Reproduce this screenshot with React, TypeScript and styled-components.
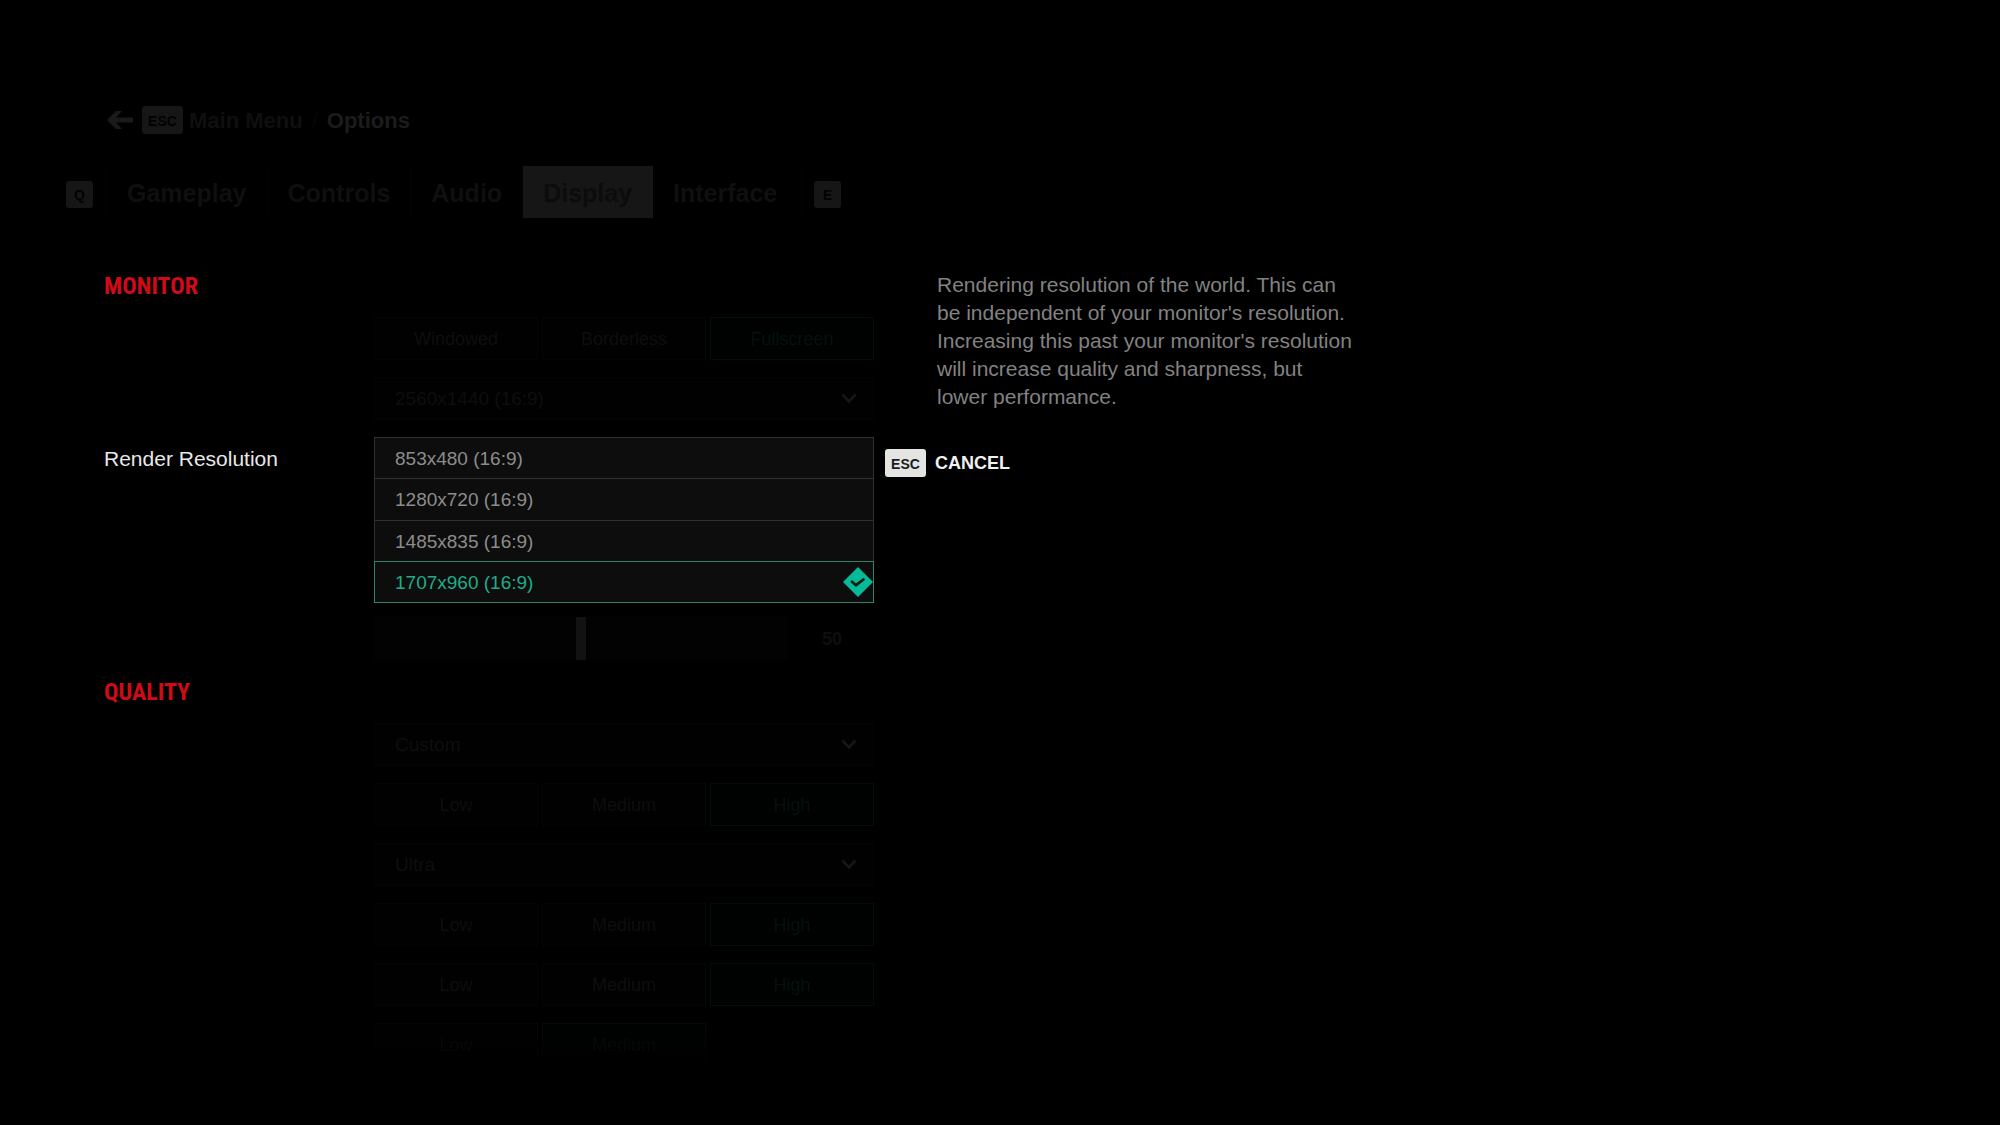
import React, { useState } from "react";
import styled, { createGlobalStyle, css } from "styled-components";

const GlobalStyle = createGlobalStyle`
  * { box-sizing: border-box; }
  body {
    margin: 0;
    background: #000;
    color: #e6e6e6;
    font-family: "Liberation Sans", Arial, sans-serif;
  }
  button, input, select { font-family: inherit; }
`;

const Page = styled.div`
  min-height: 100vh;
  padding: 106px 66px 60px;
  background: #000;
`;

const Breadcrumb = styled.nav`
  display: flex;
  align-items: center;
  height: 28px;
  padding-left: 41px;
  font-size: 22px;
  font-weight: 700;
  line-height: 30px;
`;

const BackButton = styled.button`
  display: flex;
  align-items: center;
  gap: 9px;
  padding: 0;
  border: 0;
  background: none;
  cursor: pointer;
`;

const KeyCap = styled.kbd<{ $bright?: boolean; $square?: boolean }>`
  display: flex;
  align-items: center;
  justify-content: center;
  flex: none;
  width: ${(p) => (p.$square ? 27 : 41)}px;
  height: ${(p) => (p.$square ? 27 : 28)}px;
  padding-top: 2px;
  border-radius: 3px;
  background: ${(p) => (p.$bright ? "#e4e4e3" : "#161616")};
  color: ${(p) => (p.$bright ? "#1c1c1c" : "#020202")};
  font-family: inherit;
  font-size: 14px;
  font-weight: 700;
  line-height: 16px;
`;

const Crumb = styled.a`
  margin-left: 6px;
  padding-top: 2px;
  color: #0f0f0f;
  text-decoration: none;
`;

const Slash = styled.span`
  margin: 0 9px;
  padding-top: 2px;
  color: #060606;
  font-weight: 400;
`;

const Current = styled.span`
  padding-top: 2px;
  color: #1c1c1c;
`;

const TabBar = styled.nav`
  display: flex;
  align-items: center;
  gap: 12px;
  margin-top: 32px;
`;

const KeyHint = styled.button`
  margin-top: 4px;
  padding: 0;
  border: 0;
  background: none;
  cursor: pointer;
`;

const Tabs = styled.div`
  display: flex;
  padding-left: 1px;
  border-left: 1px solid #040404;
`;

const Tab = styled.button<{ $active: boolean }>`
  height: 52px;
  padding: 2px 20px 0;
  border: 0;
  border-right: 1px solid ${(p) => (p.$active ? "#161616" : "#040404")};
  background: ${(p) => (p.$active ? "#161616" : "transparent")};
  color: ${(p) => (p.$active ? "#0c0c0c" : "#0f0f0f")};
  font-size: 25px;
  font-weight: 700;
  line-height: 50px;
  cursor: pointer;
  &:last-child { padding-right: 24px; }
`;

const Content = styled.main`
  display: grid;
  grid-template-columns: minmax(0, 770px) minmax(0, 1fr);
  column-gap: 11px;
  margin-top: 52px;
  padding-left: 38px;
`;

const Section = styled.section`
  margin-bottom: 16px;
`;

const SectionTitle = styled.h2`
  margin: 0 0 15px;
  color: #d00a17;
  font-family: "Roboto Condensed", Roboto, sans-serif;
  font-size: 24px;
  font-weight: 700;
  line-height: 32px;
`;

const Rows = styled.div`
  display: grid;
  gap: 17px;
`;

const Row = styled.div`
  display: grid;
  grid-template-columns: minmax(0, 270fr) minmax(0, 500fr);
  min-height: 43px;
`;

const RowLabel = styled.span`
  color: #e8e8e8;
  font-size: 21px;
  line-height: 43px;
`;

const Control = styled.div`
  grid-column: 2;
`;

const SegmentGroup = styled.fieldset<{ $fading?: boolean }>`
  display: grid;
  grid-template-columns: repeat(3, minmax(0, 1fr));
  gap: 4px;
  margin: 0;
  padding: 0;
  border: 0;
  ${(p) =>
    p.$fading &&
    css`
      mask-image: linear-gradient(rgba(0, 0, 0, 0.9), rgba(0, 0, 0, 0.2));
    `}
`;

const Segment = styled.label<{ $on: boolean }>`
  display: flex;
  align-items: center;
  justify-content: center;
  height: 43px;
  padding-top: 1px;
  border: 1px solid ${(p) => (p.$on ? "#030d0b" : "#040404")};
  background: ${(p) => (p.$on ? "#000101" : "#010101")};
  color: ${(p) => (p.$on ? "#03120f" : "#0e0e0e")};
  font-size: 18px;
  cursor: pointer;
`;

const HiddenRadio = styled.input`
  appearance: none;
  width: 0;
  height: 0;
  margin: 0;
`;

const SelectWrap = styled.div`
  position: relative;
`;

const SelectBox = styled.select`
  display: block;
  width: 100%;
  height: 43px;
  padding: 0 20px;
  border: 1px solid #040404;
  border-radius: 0;
  background: #010101;
  color: #0e0e0e;
  font-size: 19px;
  appearance: none;
`;

const Chevron = styled.svg`
  position: absolute;
  top: 16px;
  right: 17px;
  pointer-events: none;
`;

const OptionList = styled.div`
  display: flex;
  flex-direction: column;
  height: 166px;
  margin-bottom: -3px;
  padding-top: 1px;
`;

const Option = styled.button<{ $selected: boolean }>`
  display: flex;
  flex: 1;
  align-items: center;
  justify-content: space-between;
  margin-top: -1px;
  padding: 0 0 0 20px;
  border: 1px solid ${(p) => (p.$selected ? "#35806d" : "#303030")};
  background: #0d0d0d;
  color: ${(p) => (p.$selected ? "#1fac8a" : "#8c8c8c")};
  font-size: 19px;
  text-align: left;
  cursor: pointer;
`;

const OptionText = styled.span`
  padding-top: 2px;
`;

const SliderRow = styled.div`
  display: grid;
  grid-template-columns: minmax(0, 414fr) minmax(0, 84fr);
  gap: 2px;
`;

const Slider = styled.input`
  width: 100%;
  height: 43px;
  margin: 0;
  background: #020202;
  appearance: none;
  &::-webkit-slider-thumb {
    appearance: none;
    width: 10px;
    height: 43px;
    background: #121212;
  }
`;

const SliderValue = styled.output`
  padding-top: 1px;
  color: #0e0e0e;
  font-size: 18px;
  font-weight: 700;
  line-height: 42px;
  text-align: center;
`;

const Side = styled.aside`
  display: flex;
  flex-direction: column;
  align-items: flex-start;
`;

const Description = styled.p`
  max-width: 420px;
  margin: 0 0 38px 52px;
  padding-top: 1px;
  color: #828282;
  font-size: 21px;
  line-height: 28px;
`;

const CancelButton = styled.button`
  display: flex;
  align-items: center;
  gap: 9px;
  padding: 0;
  border: 0;
  background: none;
  color: #f0f0f0;
  font-size: 18px;
  font-weight: 700;
  cursor: pointer;
`;

function ArrowLeft() {
  return (
    <svg width="26" height="18" viewBox="0 0 26 18" aria-hidden="true">
      <path d="M0 9 9 0h6L9 6.5h17v5H9L15 18H9z" fill="#1a1a1a" />
    </svg>
  );
}

function CheckDiamond() {
  return (
    <svg width="30" height="30" viewBox="0 0 30 30" aria-hidden="true">
      <path d="M15 0 30 15 15 30 0 15z" fill="#07ba98" />
      <path
        d="M9 14.8 13 18.2 20.5 12.5"
        fill="none"
        stroke="#0d1a17"
        strokeWidth="2.8"
        strokeLinecap="round"
        strokeLinejoin="round"
      />
    </svg>
  );
}

function Segments(props: { name: string; options: string[]; initial: string; fading?: boolean }) {
  const [value, setValue] = useState(props.initial);
  return (
    <Row>
      <Control>
        <SegmentGroup aria-label={props.name} $fading={props.fading}>
          {props.options.map((option) => (
            <Segment key={option} $on={option === value}>
              <HiddenRadio
                type="radio"
                name={props.name}
                checked={option === value}
                onChange={() => setValue(option)}
              />
              {option}
            </Segment>
          ))}
        </SegmentGroup>
      </Control>
    </Row>
  );
}

function Select(props: { name: string; options: string[] }) {
  return (
    <Row>
      <Control>
        <SelectWrap>
          <SelectBox aria-label={props.name}>
            {props.options.map((option) => (
              <option key={option}>{option}</option>
            ))}
          </SelectBox>
          <Chevron width="16" height="11" viewBox="0 0 16 11" aria-hidden="true">
            <path d="M1.5 1.5 8 8.5l6.5-7" fill="none" stroke="#161616" strokeWidth="2.6" />
          </Chevron>
        </SelectWrap>
      </Control>
    </Row>
  );
}

const TABS = ["Gameplay", "Controls", "Audio", "Display", "Interface"];
const RESOLUTIONS = ["853x480 (16:9)", "1280x720 (16:9)", "1485x835 (16:9)", "1707x960 (16:9)"];
const LEVELS = ["Low", "Medium", "High"];

export default function App() {
  const [tab, setTab] = useState("Display");
  const [resolution, setResolution] = useState(RESOLUTIONS[3]);
  const [level, setLevel] = useState(50);

  return (
    <>
      <GlobalStyle />
      <Page>
        <Breadcrumb>
          <BackButton aria-label="Back">
            <ArrowLeft />
            <KeyCap>ESC</KeyCap>
          </BackButton>
          <Crumb href="#main">Main Menu</Crumb>
          <Slash>/</Slash>
          <Current>Options</Current>
        </Breadcrumb>

        <TabBar>
          <KeyHint aria-label="Previous tab">
            <KeyCap $square>Q</KeyCap>
          </KeyHint>
          <Tabs>
            {TABS.map((name) => (
              <Tab key={name} $active={name === tab} onClick={() => setTab(name)}>
                {name}
              </Tab>
            ))}
          </Tabs>
          <KeyHint aria-label="Next tab">
            <KeyCap $square>E</KeyCap>
          </KeyHint>
        </TabBar>

        <Content>
          <div>
            <Section>
              <SectionTitle>MONITOR</SectionTitle>
              <Rows>
                <Segments
                  name="Window mode"
                  options={["Windowed", "Borderless", "Fullscreen"]}
                  initial="Fullscreen"
                />
                <Select name="Resolution" options={["2560x1440 (16:9)"]} />
                <Row>
                  <RowLabel id="render-resolution">Render Resolution</RowLabel>
                  <OptionList role="listbox" aria-labelledby="render-resolution">
                    {RESOLUTIONS.map((option) => (
                      <Option
                        key={option}
                        role="option"
                        aria-selected={option === resolution}
                        $selected={option === resolution}
                        onClick={() => setResolution(option)}
                      >
                        <OptionText>{option}</OptionText>
                        {option === resolution && <CheckDiamond />}
                      </Option>
                    ))}
                  </OptionList>
                </Row>
                <Row>
                  <Control>
                    <SliderRow>
                      <Slider
                        type="range"
                        aria-label="Brightness"
                        value={level}
                        onChange={(e) => setLevel(Number(e.target.value))}
                      />
                      <SliderValue>{level}</SliderValue>
                    </SliderRow>
                  </Control>
                </Row>
              </Rows>
            </Section>

            <Section>
              <SectionTitle>QUALITY</SectionTitle>
              <Rows>
                <Select name="Preset" options={["Custom"]} />
                <Segments name="Quality 1" options={LEVELS} initial="High" />
                <Select name="Quality 2" options={["Ultra"]} />
                <Segments name="Quality 3" options={LEVELS} initial="High" />
                <Segments name="Quality 4" options={LEVELS} initial="High" />
                <Segments name="Quality 5" options={["Low", "Medium"]} initial="Medium" fading />
              </Rows>
            </Section>
          </div>

          <Side>
            <Description>
              Rendering resolution of the world. This can be independent of your monitor's
              resolution. Increasing this past your monitor's resolution will increase quality and
              sharpness, but lower performance.
            </Description>
            <CancelButton>
              <KeyCap $bright>ESC</KeyCap>
              CANCEL
            </CancelButton>
          </Side>
        </Content>
      </Page>
    </>
  );
}
